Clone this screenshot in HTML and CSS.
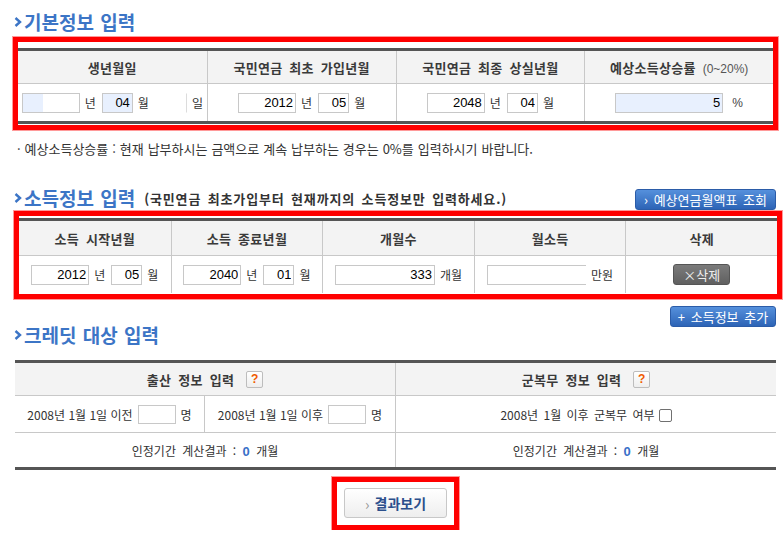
FILE: index.html
```html
<!DOCTYPE html>
<html lang="ko">
<head>
<meta charset="utf-8">
<title>국민연금 예상연금 계산</title>
<link rel="stylesheet" href="styles.css">
</head>
<body>
<div class="page">
  <h2 class="sec-title t-basic"><svg class="chev" viewBox="0 0 8 10" width="8" height="10"><polyline points="1.5,1 6,5 1.5,9"/></svg>기본정보 입력</h2>
  <div class="mark mark-basic">
    <table class="grid grid-basic">
      <thead><tr>
        <th>생년월일</th>
        <th>국민연금 최초 가입년월</th>
        <th>국민연금 최종 상실년월</th>
        <th>예상소득상승률 <span class="thin">(0~20%)</span></th>
      </tr></thead>
      <tbody><tr>
        <td><div class="fld"><input class="in yr masked" value=""><span>년</span><input class="in mo auto" value="04"><span>월</span><input class="in mo2 blank" value=""><span>일</span></div></td>
        <td><div class="fld"><input class="in yr" value="2012"><span>년</span><input class="in mo" value="05"><span>월</span></div></td>
        <td><div class="fld"><input class="in yr" value="2048"><span>년</span><input class="in mo" value="04"><span>월</span></div></td>
        <td><div class="fld"><input class="in rate auto" value="5"><span class="pct">%</span></div></td>
      </tr></tbody>
    </table>
  </div>
  <p class="note">· 예상소득상승률 : 현재 납부하시는 금액으로 계속 납부하는 경우는 0%를 입력하시기 바랍니다.</p>

  <div class="title-row">
    <h2 class="sec-title"><svg class="chev" viewBox="0 0 8 10" width="8" height="10"><polyline points="1.5,1 6,5 1.5,9"/></svg>소득정보 입력<span class="sub">(국민연금 최초가입부터 현재까지의 소득정보만 입력하세요.)</span></h2>
    <button class="btn-blue btn-table">› 예상연금월액표 조회</button>
  </div>
  <div class="mark mark-income">
    <table class="grid grid-income">
      <thead><tr>
        <th>소득 시작년월</th>
        <th>소득 종료년월</th>
        <th>개월수</th>
        <th>월소득</th>
        <th>삭제</th>
      </tr></thead>
      <tbody><tr>
        <td><div class="fld"><input class="in yr" value="2012"><span>년</span><input class="in mo" value="05"><span>월</span></div></td>
        <td><div class="fld"><input class="in yr" value="2040"><span>년</span><input class="in mo" value="01"><span>월</span></div></td>
        <td><div class="fld"><input class="in months" value="333"><span>개월</span></div></td>
        <td><div class="fld"><input class="in income" value=""><span>만원</span></div></td>
        <td><div class="fld"><button class="btn-del">×삭제</button></div></td>
      </tr></tbody>
    </table>
  </div>
  <div class="add-row"><button class="btn-blue btn-add">+ 소득정보 추가</button></div>

  <h2 class="sec-title t-credit"><svg class="chev" viewBox="0 0 8 10" width="8" height="10"><polyline points="1.5,1 6,5 1.5,9"/></svg>크레딧 대상 입력</h2>
  <table class="grid grid-credit">
    <colgroup><col class="c1"><col class="c2"><col class="c3"></colgroup>
    <thead><tr>
      <th colspan="2"><div class="fld">출산 정보 입력<span class="help">?</span></div></th>
      <th><div class="fld">군복무 정보 입력<span class="help">?</span></div></th>
    </tr></thead>
    <tbody>
      <tr class="r-input">
        <td><div class="fld">2008년 1월 1일 이전<input class="in cnt" value=""><span>명</span></div></td>
        <td><div class="fld">2008년 1월 1일 이후<input class="in cnt" value=""><span>명</span></div></td>
        <td class="mil"><div class="fld">2008년 1월 이후 군복무 여부<input type="checkbox" class="cb"></div></td>
      </tr>
      <tr class="r-result">
        <td colspan="2">인정기간 계산결과 : <b class="num">0</b> 개월</td>
        <td>인정기간 계산결과 : <b class="num">0</b> 개월</td>
      </tr>
    </tbody>
  </table>

  <div class="mark mark-result">
    <button class="btn-result"><span class="arr">›</span>결과보기</button>
  </div>
</div>
</body>
</html>
```

FILE: styles.css
```css
* { box-sizing: border-box; }

body {
  margin: 0;
  background: #fff;
  font-family: "Noto Sans CJK KR", "Liberation Sans", sans-serif;
  font-size: 12px;
  color: #333;
}

.page {
  width: 783px;
  padding-top: 10px;
}

.sec-title {
  margin: 0 0 0 14px;
  height: 24px;
  display: flex;
  align-items: center;
  font-size: 19px;
  font-weight: bold;
  line-height: 24px;
  color: #3c75c6;
  white-space: nowrap;
  word-spacing: 1px;
}

.chev {
  margin-right: 2px;
  flex: none;
}
.chev polyline {
  fill: none;
  stroke: #3c75c6;
  stroke-width: 2.4;
}

.sub {
  margin-left: 9px;
  font-size: 13px;
  color: #333;
  padding-top: 2px;
  letter-spacing: 0.85px;
  word-spacing: 2px;
}

.mark {
  border: 5px solid #ff0000;
  box-shadow: 0 0 0 1px #ff9a9a;
}

.mark-basic {
  margin: 3px 0 0 13px;
  width: 765px;
  padding: 6px 0 1px;
}

.mark-income {
  margin: 1px 0 0 14px;
  width: 768px;
  padding: 2px 0 1px;
}

.mark-result {
  margin: 7px 0 0 332px;
  width: 127px;
  padding: 6px 7px 7px;
}

.grid {
  width: 100%;
  border-collapse: separate;
  border-spacing: 0;
  table-layout: fixed;
  border-top: 3px solid #555;
}

.grid th {
  background: #f3f3f3;
  font-weight: bold;
  font-size: 13px;
  color: #3a3a3a;
  padding: 0;
  border-bottom: 1px solid #c8c8c8;
  text-align: center;
  word-spacing: 3px;
  letter-spacing: 0.3px;
}

.grid td {
  padding: 0;
  text-align: center;
  font-size: 12px;
  color: #333;
}

.grid th + th,
.grid td + td {
  border-left: 1px solid #c8c8c8;
}

.grid-basic th { height: 33px; }
.grid-basic td { height: 37px; }
.grid-basic { border-bottom: 3px solid #555; }

.grid-income th { height: 35px; }
.grid-income td { height: 37px; }

.thin {
  font-weight: normal;
  font-size: 12px;
  color: #555;
  letter-spacing: 0;
  font-family: "Liberation Sans", "Noto Sans CJK KR", sans-serif;
}

.fld {
  display: flex;
  justify-content: center;
  align-items: center;
  gap: 5px;
}

.in {
  height: 20px;
  border: 1px solid #c8c8c8;
  padding: 0 2px;
  margin: 0;
  font-family: "Liberation Sans", Arial, sans-serif;
  font-size: 13px;
  color: #000;
  text-align: right;
  background: #fff;
  outline: none;
}

.yr { width: 58px; }
.mo { width: 31px; margin-left: 1px; }
.mo2 { width: 32px; margin-left: 1px; }
.rate { width: 108px; }
.months { width: 100px; }
.income { width: 99px; border-right: none; }
.cnt { width: 38px; height: 19px; }

.auto { background: #e8f0fe; }
.masked { background: linear-gradient(to right, #e8f0fe 0 20px, #fff 20px); }
.blank { border-color: transparent #dcdcdc transparent transparent; }

.pct {
  margin-left: 4px;
  font-family: "Liberation Sans", sans-serif;
  color: #444;
}

.note {
  margin: 10px 0 0 17px;
  line-height: 18px;
  font-size: 13px;
  color: #333;
  word-spacing: 0.3px;
}

.title-row {
  margin-top: 28px;
  width: 776px;
  height: 24px;
  display: flex;
  justify-content: space-between;
  align-items: flex-end;
}

.btn-blue {
  height: 21px;
  padding: 0;
  border: 1px solid #2b5ca8;
  border-radius: 3px;
  background: linear-gradient(#5590dc, #2d64b6);
  color: #fff;
  font-family: "Noto Sans CJK KR", sans-serif;
  font-size: 13px;
  line-height: 19px;
  word-spacing: 2px;
}

.btn-table { width: 141px; }

.add-row {
  margin-top: 7px;
  width: 776px;
  display: flex;
  justify-content: flex-end;
}

.btn-add { width: 106px; }

.btn-del {
  width: 57px;
  height: 21px;
  padding: 0;
  border: 1px solid #555;
  border-radius: 3px;
  background: linear-gradient(#7b7b7b, #606060);
  color: #eee;
  font-family: "Noto Sans CJK KR", sans-serif;
  font-size: 13px;
  line-height: 19px;
}

.t-credit { margin-top: -4px; }

.grid-credit {
  margin: 13px 0 0 15px;
  width: 761px;
  border-bottom: 3px solid #555;
}
.grid-credit .c1 { width: 189px; }
.grid-credit .c2 { width: 191px; }
.grid-credit th { height: 33px; }
.grid-credit .r-input td { height: 37px; border-bottom: 1px solid #c8c8c8; }
.grid-credit .r-result td { height: 34px; word-spacing: 3px; }
.grid-credit .mil { word-spacing: 2px; }

.help {
  margin-left: 7px;
  width: 17px;
  height: 17px;
  border: 1px solid #bdbdbd;
  border-radius: 2px;
  background: linear-gradient(#fff, #eee);
  color: #f05a00;
  font-family: "Liberation Sans", sans-serif;
  font-size: 12px;
  font-weight: bold;
  line-height: 15px;
  text-align: center;
}

.cb {
  appearance: none;
  -webkit-appearance: none;
  margin: 2px 0 0 -1px;
  width: 13px;
  height: 13px;
  border: 1px solid #707070;
  border-radius: 2px;
  background: #fff;
}

.num {
  color: #3a6fc8;
  font-family: "Liberation Sans", sans-serif;
  font-size: 13px;
}

.btn-result {
  display: flex;
  align-items: center;
  justify-content: center;
  width: 103px;
  height: 30px;
  padding: 0;
  border: 1px solid #c8c8c8;
  border-radius: 3px;
  background: linear-gradient(#ffffff, #eeeeee);
  color: #2b4f8c;
  font-family: "Noto Sans CJK KR", sans-serif;
  font-size: 14px;
  font-weight: bold;
}

.arr {
  color: #999;
  font-weight: normal;
  font-size: 15px;
  margin-right: 5px;
}
```
